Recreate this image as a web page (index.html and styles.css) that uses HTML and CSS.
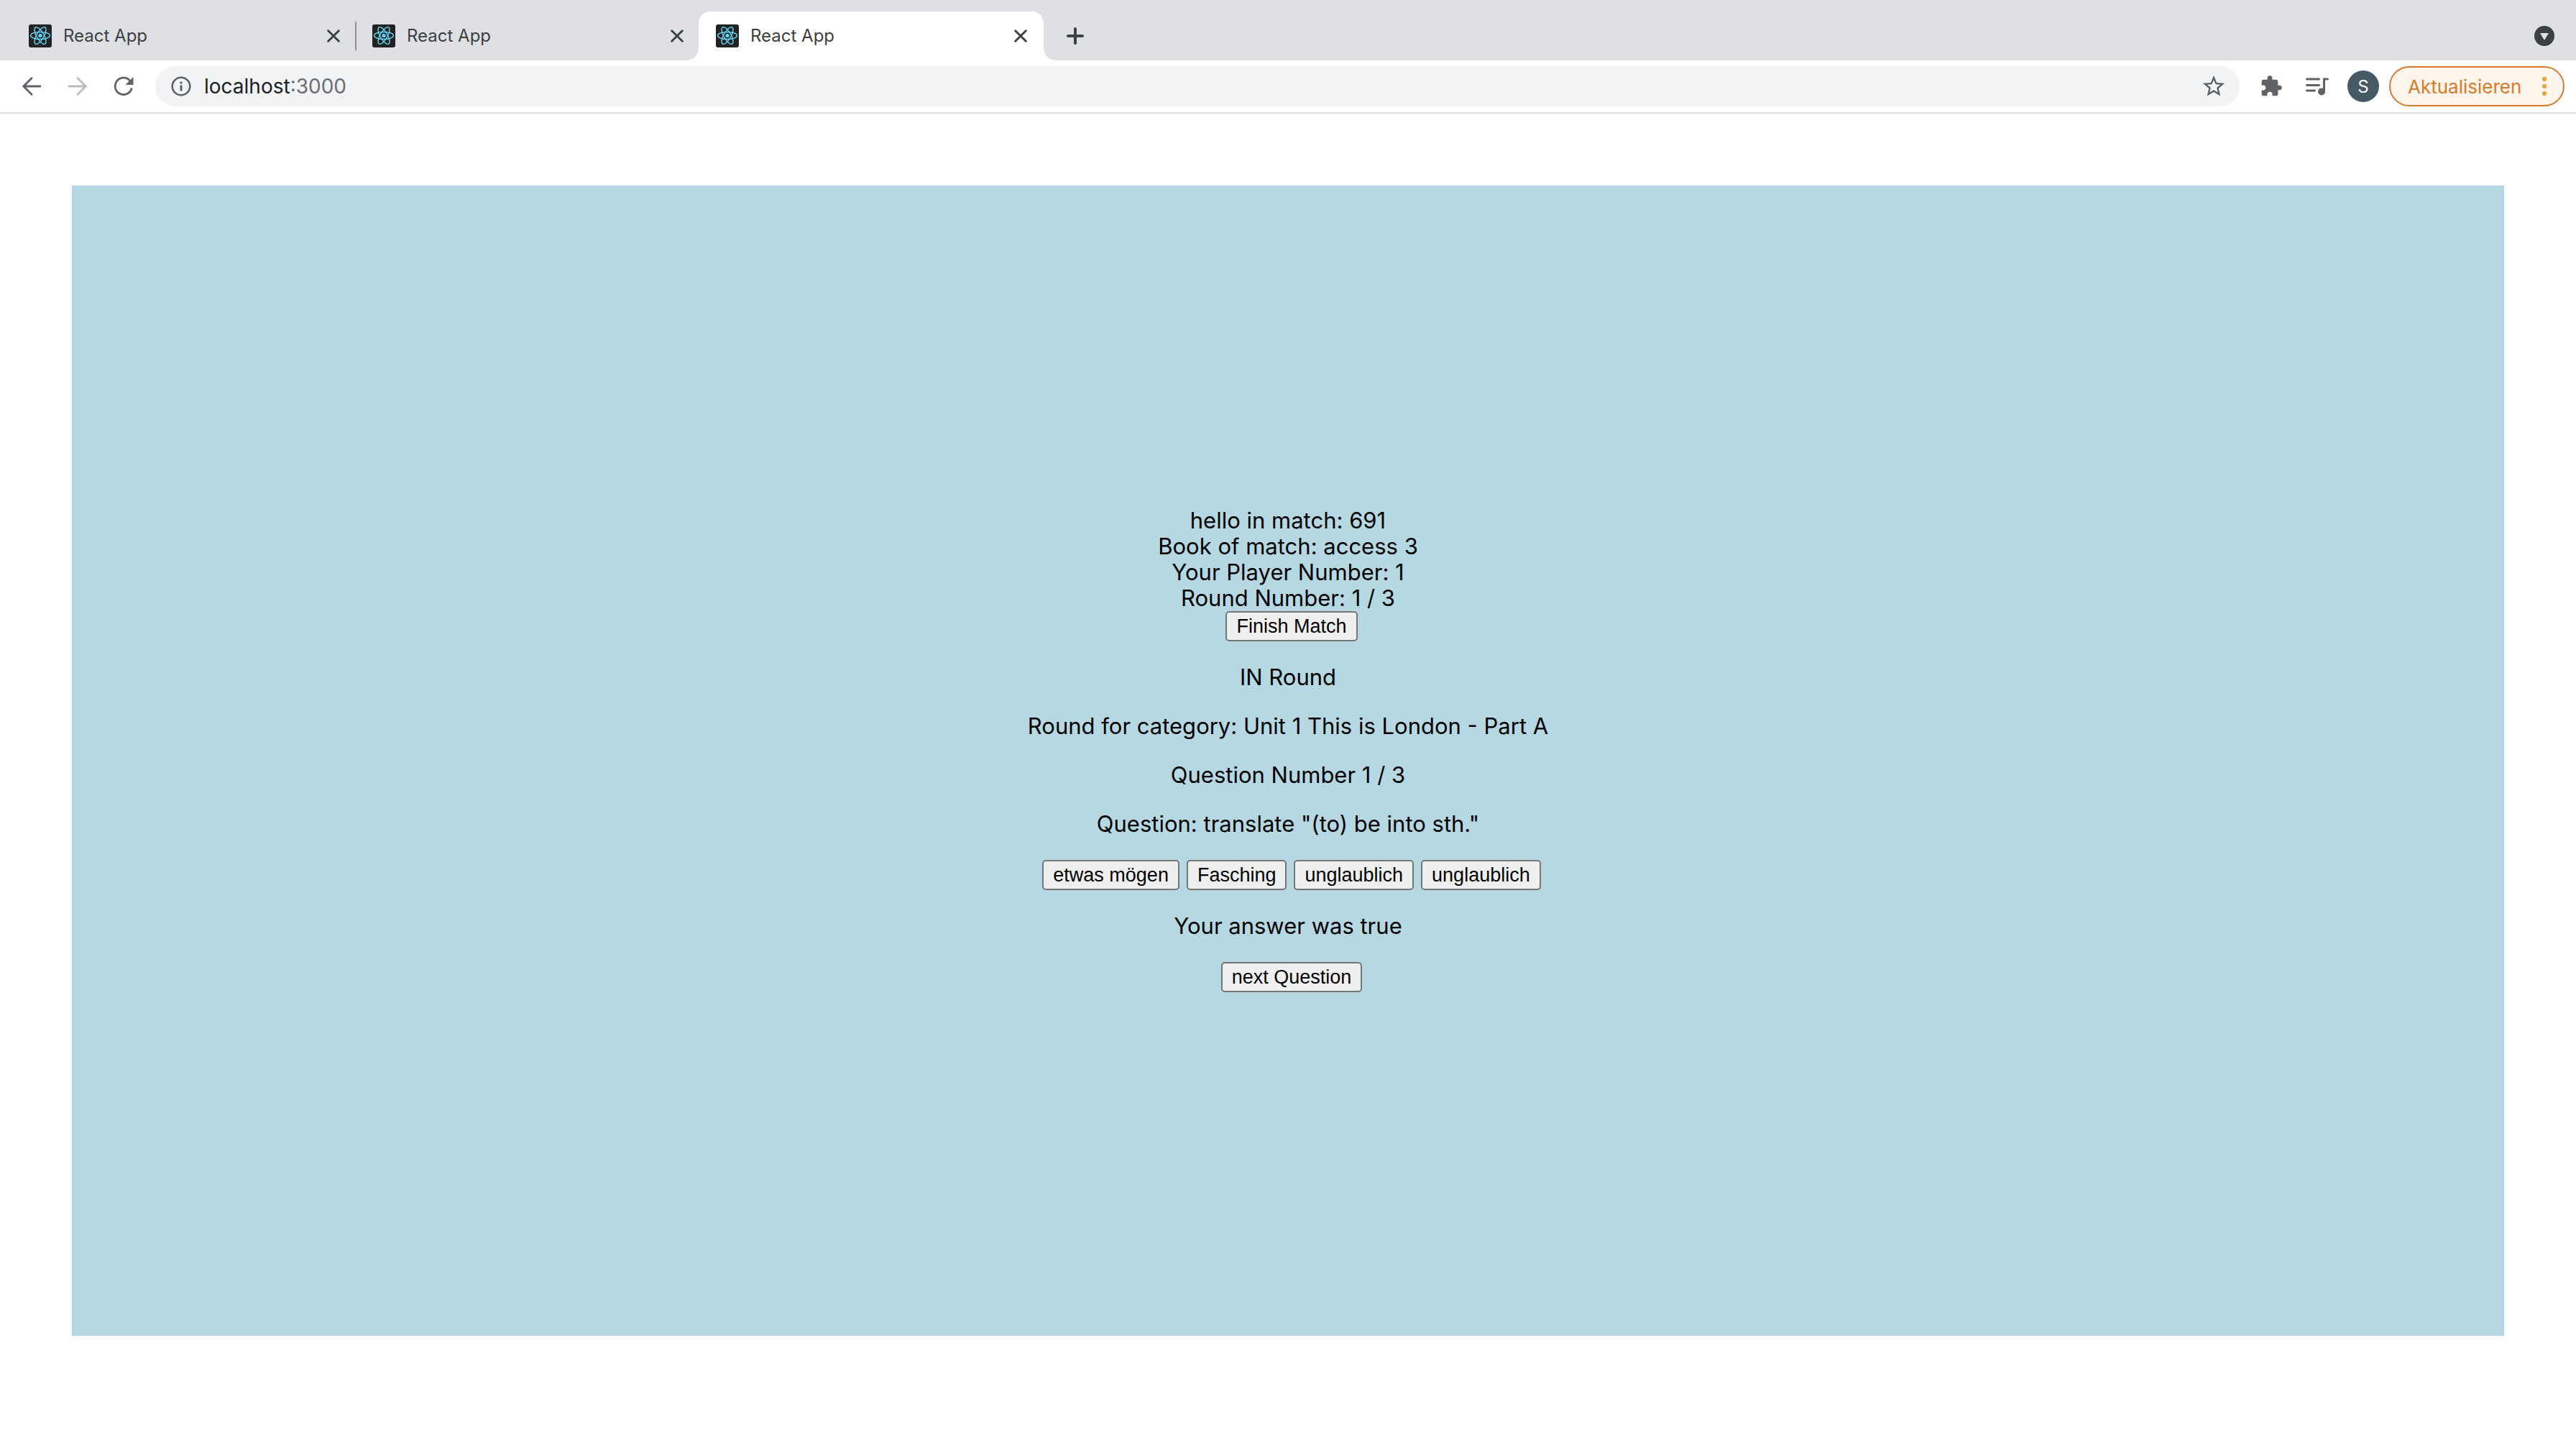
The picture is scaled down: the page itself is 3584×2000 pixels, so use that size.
FILE: index.html
```html
<!DOCTYPE html>
<html lang="de">
<head>
<meta charset="utf-8">
<title>React App</title>
<link rel="stylesheet" href="styles.css">
</head>
<body>
<svg class="defs" width="0" height="0" aria-hidden="true">
  <symbol id="react" viewBox="0 0 32 32">
    <rect width="32" height="32" rx="3" fill="#222"/>
    <g fill="none" stroke="#61dafb" stroke-width="1.4">
      <ellipse cx="16" cy="15.5" rx="13.4" ry="5"/>
      <ellipse cx="16" cy="15.5" rx="13.4" ry="5" transform="rotate(60 16 15.5)"/>
      <ellipse cx="16" cy="15.5" rx="13.4" ry="5" transform="rotate(120 16 15.5)"/>
    </g>
    <circle cx="16" cy="15.5" r="2.6" fill="#61dafb"/>
  </symbol>
  <symbol id="close" viewBox="0 0 16 16">
    <path d="M1.5 1.5l13 13M14.5 1.5l-13 13" stroke="#3c4043" stroke-width="2.600" stroke-linecap="round"/>
  </symbol>
  <symbol id="arrow" viewBox="0 0 28 28">
    <path d="M26 14H3.500M14 2.800L2.800 14L14 25.200" fill="none" stroke="currentColor" stroke-width="2.800" stroke-linecap="round" stroke-linejoin="miter"/>
  </symbol>
</svg>

<header class="browser">
  <nav class="tabs" aria-label="Tabs">
    <div class="tab tab-divided">
      <svg class="favicon"><use href="#react"/></svg>
      <span class="tab-title">React App</span>
      <button class="icon-button tab-close" aria-label="Tab schließen"><svg width="18" height="18"><use href="#close"/></svg></button>
    </div>
    <div class="tab">
      <svg class="favicon"><use href="#react"/></svg>
      <span class="tab-title">React App</span>
      <button class="icon-button tab-close" aria-label="Tab schließen"><svg width="18" height="18"><use href="#close"/></svg></button>
    </div>
    <div class="tab tab-active">
      <svg class="favicon"><use href="#react"/></svg>
      <span class="tab-title">React App</span>
      <button class="icon-button tab-close" aria-label="Tab schließen"><svg width="18" height="18"><use href="#close"/></svg></button>
    </div>
    <button class="icon-button tab-new" aria-label="Neuer Tab">
      <svg width="24" height="24" viewBox="0 0 24 24"><path d="M12 2v20M2 12h20" stroke="#3c4043" stroke-width="4" stroke-linecap="round"/></svg>
    </button>
    <button class="icon-button tab-search" aria-label="Tabs durchsuchen">
      <svg width="28" height="28" viewBox="0 0 28 28"><circle cx="14" cy="14" r="14" fill="#3c4043"/><path d="M8 10h12l-6 10z" fill="#dee0e4"/></svg>
    </button>
  </nav>

  <div class="toolbar">
    <div class="nav-buttons">
      <button class="icon-button nav-button" aria-label="Zurück"><svg width="28" height="28"><use href="#arrow"/></svg></button>
      <button class="icon-button nav-button nav-forward" aria-label="Vorwärts"><svg width="28" height="28"><use href="#arrow"/></svg></button>
      <button class="icon-button nav-button" aria-label="Neu laden">
        <svg width="28" height="28" viewBox="0 0 28 28"><path d="M25 17.500A11.700 11.700 0 1 1 23 6.500" fill="none" stroke="currentColor" stroke-width="2.800" stroke-linecap="round"/><path d="M27.500 1v11H16.500z" fill="currentColor"/></svg>
      </button>
    </div>
    <div class="address">
      <svg width="28" height="28" viewBox="0 0 28 28"><circle cx="14" cy="14" r="12.300" fill="none" stroke="#5f6368" stroke-width="2.600"/><path d="M12.500 7.500h3v3h-3zM12.500 12.500h3v8h-3z" fill="#5f6368"/></svg>
      <label class="url"><input class="url-host" type="text" value="localhost" aria-label="Adresse"><span class="url-port">:3000</span></label>
      <button class="icon-button" aria-label="Lesezeichen">
        <svg width="36" height="36" viewBox="0 0 24 24"><path fill="#5f6368" d="M22 9.240l-7.190-.62L12 2 9.190 8.630 2 9.240l5.460 4.730L5.820 21 12 17.270 18.180 21l-1.630-7.030L22 9.240zM12 15.400l-3.760 2.270 1-4.280-3.320-2.880 4.380-.38L12 6.100l1.710 4.040 4.380.38-3.320 2.880 1 4.280L12 15.400z"/></svg>
      </button>
    </div>
    <button class="icon-button extension" aria-label="Erweiterungen">
      <svg width="32" height="32" viewBox="0 0 24 24"><path fill="#5f6368" d="M20.500 11H19V7c0-1.100-.9-2-2-2h-4V3.500a2.500 2.500 0 0 0-5 0V5H4c-1.100 0-1.990.9-1.990 2v3.800H3.500a2.700 2.700 0 0 1 0 5.400H2V20c0 1.100.9 2 2 2h3.800v-1.500a2.700 2.700 0 0 1 5.400 0V22H17c1.100 0 2-.9 2-2v-4h1.500a2.500 2.500 0 0 0 0-5z"/></svg>
    </button>
    <button class="icon-button media" aria-label="Medien">
      <svg width="32" height="26" viewBox="0 0 32 26"><path d="M1.500 3h17M1.500 11.500h17M1.500 19h11" stroke="#5f6368" stroke-width="3" stroke-linecap="round"/><path d="M30.500 3H25.500V20" fill="none" stroke="#5f6368" stroke-width="3" stroke-linecap="round"/><circle cx="22" cy="20.500" r="5" fill="#5f6368"/></svg>
    </button>
    <button class="icon-button avatar" aria-label="Profil S">S</button>
    <button class="update">
      <span>Aktualisieren</span>
      <svg width="6" height="26" viewBox="0 0 6 26"><g fill="#eb9f38"><circle cx="3" cy="3" r="3"/><circle cx="3" cy="13" r="3"/><circle cx="3" cy="23" r="3"/></g></svg>
    </button>
  </div>
</header>

<main class="panel">
  <div class="match">
    <div>hello in match: 691</div>
    <div>Book of match: access 3</div>
    <div>Your Player Number: 1</div>
    <div>Round Number: 1 / 3</div>
    <button class="action">Finish Match</button>
  </div>
  <p>IN Round</p>
  <p>Round for category: Unit 1 This is London - Part A</p>
  <p>Question Number 1 / 3</p>
  <p>Question: translate "(to) be into sth."</p>
  <div class="answers">
    <button class="action">etwas mögen</button>
    <button class="action">Fasching</button>
    <button class="action">unglaublich</button>
    <button class="action">unglaublich</button>
  </div>
  <p>Your answer was true</p>
  <button class="action">next Question</button>
</main>
</body>
</html>
```

FILE: styles.css
```css
* {
  box-sizing: border-box;
}

body {
  margin: 0;
  background: #fff;
  color: #000;
  font-family: Inter, "Liberation Sans", sans-serif;
}

svg {
  display: block;
  flex: none;
}

.defs {
  position: absolute;
}

.icon-button {
  display: flex;
  align-items: center;
  justify-content: center;
  flex: none;
  padding: 0;
  border: 0;
  background: none;
  color: inherit;
  font: inherit;
}

/* Tab strip */
.browser {
  border-bottom: 2px solid #dadce4;
}

.tabs {
  display: flex;
  align-items: center;
  height: 84px;
  padding: 16px 30px 0 16px;
  background: #dee0e4;
}

.tab {
  position: relative;
  display: flex;
  align-items: center;
  width: 478px;
  height: 68px;
  padding: 0 21px 0 24px;
}

.tab-divided::after {
  content: "";
  position: absolute;
  right: -2px;
  width: 2px;
  height: 40px;
  background: #909296;
}

.tab-active {
  width: 480px;
  padding-right: 23px;
  background: #fff;
  border-radius: 16px 16px 0 0;
}

.tab-active::before,
.tab-active::after {
  content: "";
  position: absolute;
  bottom: 0;
  width: 16px;
  height: 16px;
}

.tab-active::before {
  right: 100%;
  background: radial-gradient(circle at 0 0, transparent 15px, #fff 16px);
}

.tab-active::after {
  left: 100%;
  background: radial-gradient(circle at 100% 0, transparent 15px, #fff 16px);
}

.favicon {
  width: 32px;
  height: 32px;
}

.tab-title {
  flex: 1;
  margin-left: 16px;
  color: #3c4043;
  font-size: 24px;
  line-height: 32px;
}

.tab-new {
  margin-left: 32px;
}

.tab-search {
  margin-left: auto;
}

/* Toolbar */
.toolbar {
  display: flex;
  align-items: center;
  height: 72px;
  padding: 0 16px 0 30px;
}

.nav-buttons {
  display: flex;
  gap: 36px;
  margin-right: 30px;
}

.nav-button {
  color: #5f6368;
}

.nav-forward {
  color: #babcbe;
  transform: scaleX(-1);
}

.address {
  display: flex;
  flex: 1;
  align-items: center;
  height: 56px;
  padding: 0 18px 0 22px;
  border-radius: 28px;
  background: #f1f3f4;
}

.url {
  display: flex;
  flex: 1;
  margin-left: 18px;
  font-size: 28px;
  line-height: 36px;
}

.url-host {
  field-sizing: content;
  padding: 0;
  border: 0;
  background: none;
  color: #202124;
  font: inherit;
}

.url-port {
  color: #6b6e72;
}

.extension {
  margin-left: 28px;
}

.media {
  margin-left: 32px;
}

.avatar {
  width: 44px;
  height: 44px;
  margin: 0 14px 0 26px;
  border-radius: 50%;
  background: #455a64;
  color: #fff;
  font-size: 24px;
}

.update {
  display: flex;
  align-items: center;
  justify-content: space-between;
  width: 244px;
  height: 56px;
  padding: 0 23px 0 24px;
  border: 2px solid #d97b2b;
  border-radius: 28px;
  background: #fdf4eb;
  color: #d97b2b;
  font-family: inherit;
  font-size: 26px;
}

/* Quiz page */
.panel {
  display: flex;
  flex-direction: column;
  align-items: center;
  justify-content: center;
  gap: 32px;
  min-height: 80vh;
  margin: 100px;
  padding-bottom: 30px;
  background: #b5d8e3;
  font-size: 31px;
  line-height: 36px;
  text-align: center;
}

.panel p {
  margin: 0;
}

.match,
.answers {
  display: flex;
}

.match {
  flex-direction: column;
  align-items: center;
}

.action {
  height: 42px;
  margin: 0 0 0 10px;
  padding: 0 13px;
  border: 2px solid #767676;
  border-radius: 5px;
  background: #efefef;
  color: #000;
  font-family: "Liberation Sans", Arial, sans-serif;
  font-size: 27px;
  line-height: 36px;
}
```
